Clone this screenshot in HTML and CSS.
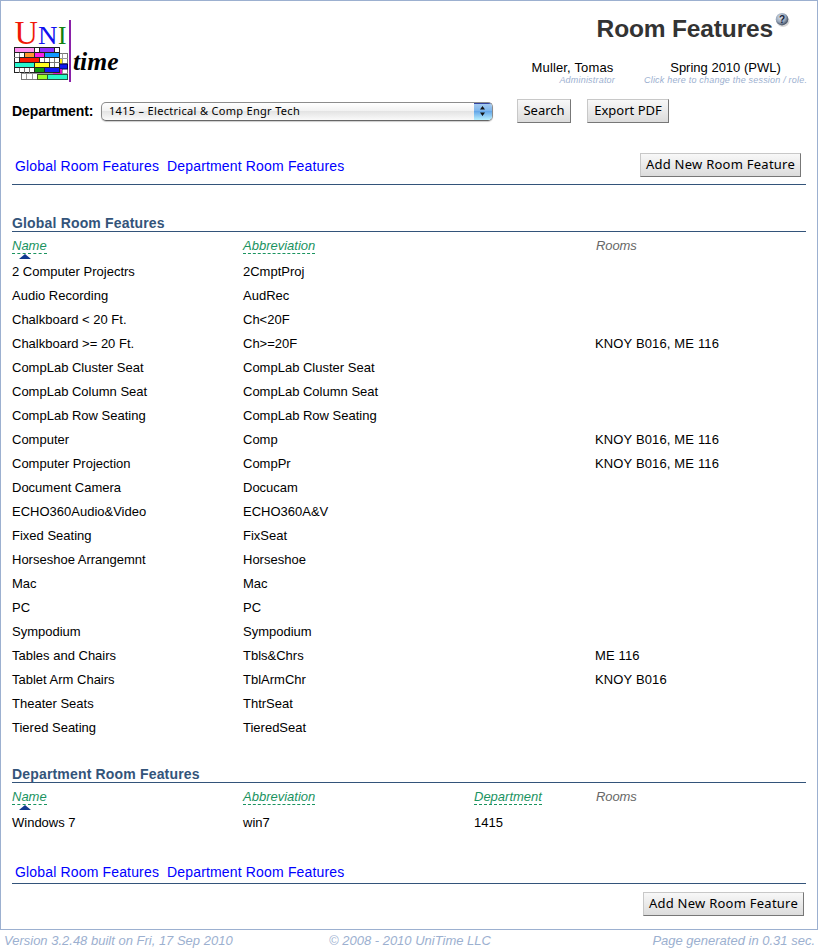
FILE: index.html
```
<!DOCTYPE html>
<html lang="en">
<head>
<meta charset="utf-8">
<title>Room Features</title>
<link rel="stylesheet" href="styles.css">
</head>
<body>
<div class="frame">
  <header class="header">
    <svg class="logo" width="110" height="76" viewBox="12 8 110 76" aria-label="UniTime">
      <g font-family="Liberation Serif, serif">
        <text x="14.5" y="43.5" font-size="33" fill="#f01808" textLength="23.5" lengthAdjust="spacingAndGlyphs">U</text>
        <text x="38" y="43.5" font-size="26" fill="#1010f0" textLength="19.5" lengthAdjust="spacingAndGlyphs">N</text>
        <text x="58" y="43.5" font-size="26" fill="#108010" textLength="8.5" lengthAdjust="spacingAndGlyphs">I</text>
        <text x="73" y="69.5" font-size="25" font-weight="bold" font-style="italic" textLength="45.5" lengthAdjust="spacingAndGlyphs">time</text>
      </g>
      <path d="M70 20V82" stroke="#8a20a8" stroke-width="2"/>
      <g stroke-width="1">
        <rect x="21.5" y="53.5" width="46" height="26" fill="#fff" stroke="#777"/>
        <path d="M62.500 53.500v26M57.500 74v5M52.500 74v5M47.500 74v5M42.500 74v5M37.500 74v5M32.500 74v5M26.500 74v5M60 58.500h8M60 63.500h8M60 68.500h8M22 73.500h46" stroke="#999"/>
        <rect x="58" y="59" width="4" height="5" fill="#ffee10"/>
        <rect x="59" y="64" width="8.500" height="5" fill="#1018f0" stroke="#004"/>
        <rect x="53" y="69" width="9" height="5" fill="#e010c0"/>
        <rect x="37.500" y="74.500" width="10" height="5" fill="#98ff28" stroke="#452"/>
        <rect x="47.500" y="74.500" width="20" height="5" fill="#28f8c8" stroke="#254"/>
        <rect x="14.500" y="47.500" width="45" height="25" fill="#fff" stroke="#222"/>
        <path d="M14 52.500h46M14 57.500h46M14 62.500h46M14 67.500h46M19.500 53v9M24.500 53v5M44.500 58v5M49.500 58v5M54.500 58v15M19.500 68v5M24.500 68v5M29.500 68v5M34.500 68v5" stroke="#777"/>
        <g stroke="#222">
          <rect x="14.500" y="47.500" width="20" height="5" fill="#ff90f0"/>
          <rect x="39.500" y="47.500" width="15" height="5" fill="#9030ff"/>
          <rect x="24.500" y="52.500" width="10" height="5" fill="#ff9830"/>
          <rect x="34.500" y="52.500" width="10" height="5" fill="#f820e8"/>
          <rect x="44.500" y="52.500" width="15" height="5" fill="#1098ff"/>
          <rect x="19.500" y="57.500" width="20" height="5" fill="#f81800"/>
          <rect x="14.500" y="62.500" width="20" height="5" fill="#28f8d0"/>
          <rect x="34.500" y="62.500" width="15" height="5" fill="#ffff20"/>
          <rect x="34.500" y="67.500" width="10" height="5" fill="#109810"/>
          <rect x="44.500" y="67.500" width="15" height="5" fill="#1018f8"/>
        </g>
      </g>
    </svg>
    <div class="heading">
      <h1><span class="title">Room Features</span><svg class="help" width="15" height="16" viewBox="0 0 15 16">
        <defs><radialGradient id="ball" cx=".4" cy=".35" r=".65"><stop offset="0" stop-color="#dce6f0"/><stop offset=".6" stop-color="#9aa8bb"/><stop offset="1" stop-color="#445064"/></radialGradient></defs>
        <ellipse cx="8" cy="9" rx="6.500" ry="6" fill="#bbb" opacity=".6"/>
        <circle cx="7" cy="7.200" r="6.200" fill="url(#ball)"/>
        <text x="7" y="10.800" text-anchor="middle" font-family="Liberation Sans, sans-serif" font-size="10" font-weight="bold" fill="#18233a">?</text>
      </svg></h1>
      <div class="session">
        <div class="user"><div class="main">Muller, Tomas</div><div class="hint">Administrator</div></div>
        <div class="term"><div class="main">Spring 2010 (PWL)</div><div class="hint">Click here to change the session / role.</div></div>
      </div>
    </div>
  </header>

  <div class="filter">
    <label>Department:</label>
    <div class="select"><span>1415 – Electrical &amp; Comp Engr Tech</span><i><svg width="18" height="16" viewBox="0 0 18 16"><path d="M6 6.500L8.500 3L11 6.500zM6 9.500L8.500 13L11 9.500z" fill="#111"/></svg></i></div>
    <button class="search">Search</button>
    <button class="export">Export PDF</button>
  </div>

  <div class="toolbar">
    <nav><a>Global Room Features</a><a>Department Room Features</a></nav>
    <button class="add">Add New Room Feature</button>
  </div>

  <section class="global">
    <h2>Global Room Features</h2>
    <div class="row head"><div><span class="sort">Name</span><b class="arrow"></b></div><div><span class="sort">Abbreviation</span></div><div></div><div>Rooms</div></div>
    <div class="row"><div>2 Computer Projectrs</div><div>2CmptProj</div></div>
    <div class="row"><div>Audio Recording</div><div>AudRec</div></div>
    <div class="row"><div>Chalkboard &lt; 20 Ft.</div><div>Ch&lt;20F</div></div>
    <div class="row"><div>Chalkboard &gt;= 20 Ft.</div><div>Ch&gt;=20F</div><div></div><div class="rooms">KNOY B016, ME 116</div></div>
    <div class="row"><div>CompLab Cluster Seat</div><div>CompLab Cluster Seat</div></div>
    <div class="row"><div>CompLab Column Seat</div><div>CompLab Column Seat</div></div>
    <div class="row"><div>CompLab Row Seating</div><div>CompLab Row Seating</div></div>
    <div class="row"><div>Computer</div><div>Comp</div><div></div><div class="rooms">KNOY B016, ME 116</div></div>
    <div class="row"><div>Computer Projection</div><div>CompPr</div><div></div><div class="rooms">KNOY B016, ME 116</div></div>
    <div class="row"><div>Document Camera</div><div>Docucam</div></div>
    <div class="row"><div>ECHO360Audio&amp;Video</div><div>ECHO360A&amp;V</div></div>
    <div class="row"><div>Fixed Seating</div><div>FixSeat</div></div>
    <div class="row"><div>Horseshoe Arrangemnt</div><div>Horseshoe</div></div>
    <div class="row"><div>Mac</div><div>Mac</div></div>
    <div class="row"><div>PC</div><div>PC</div></div>
    <div class="row"><div>Sympodium</div><div>Sympodium</div></div>
    <div class="row"><div>Tables and Chairs</div><div>Tbls&amp;Chrs</div><div></div><div class="rooms">ME 116</div></div>
    <div class="row"><div>Tablet Arm Chairs</div><div>TblArmChr</div><div></div><div class="rooms">KNOY B016</div></div>
    <div class="row"><div>Theater Seats</div><div>ThtrSeat</div></div>
    <div class="row"><div>Tiered Seating</div><div>TieredSeat</div></div>
  </section>

  <section class="departmental">
    <h2>Department Room Features</h2>
    <div class="row head"><div><span class="sort">Name</span><b class="arrow"></b></div><div><span class="sort">Abbreviation</span></div><div><span class="sort">Department</span></div><div>Rooms</div></div>
    <div class="row"><div>Windows 7</div><div>win7</div><div>1415</div></div>
  </section>

  <div class="bottom-links"><nav><a>Global Room Features</a><a>Department Room Features</a></nav></div>
  <div class="bottom-actions"><button class="add">Add New Room Feature</button></div>
</div>
<footer><span>Version 3.2.48 built on Fri, 17 Sep 2010</span><span>© 2008 - 2010 UniTime LLC</span><span>Page generated in 0.31 sec.</span></footer>
</body>
</html>
```
FILE: styles.css
```
* { box-sizing: border-box; }
html, body { margin: 0; height: 951px; overflow: hidden; background: #fff; }
body { font-family: "Liberation Sans", Arial, sans-serif; font-size: 13px; color: #000; }
.frame { height: 930px; border: 1px solid #9cb0d0; padding: 0 11px; }

.header { height: 92px; display: flex; justify-content: space-between; }
.logo { margin-top: 7px; display: block; flex: none; }
.heading { width: 300px; margin-right: -1px; }
h1 { margin: 11px 17px 0 0; height: 34px; display: flex; justify-content: flex-end; font-size: 24.5px; line-height: 33px; color: #333; white-space: nowrap; }
.title { letter-spacing: -.15px; }
.help { margin: 0 0 0 2px; display: block; }
.session { display: flex; justify-content: flex-end; margin-top: 13px; white-space: nowrap; }
.session .main { height: 16px; line-height: 17px; text-align: center; letter-spacing: .15px; }
.session .term .main { letter-spacing: 0; }
.session .hint { height: 11px; line-height: 11px; font-size: 9px; font-style: italic; color: #9cb0d0; text-align: right; letter-spacing: .2px; }
.user { width: 85px; margin-right: 29px; }
.term { width: 163px; }

.filter { display: flex; align-items: flex-start; height: 52px; padding-top: 6px; }
.filter label { width: 89px; font-size: 14px; font-weight: bold; line-height: 24px; letter-spacing: -.1px; }
.select { width: 392px; height: 19px; margin-top: 3px; border: 1px solid #8c8c8c; border-bottom-color: #666; border-radius: 5px; overflow: hidden; display: flex; justify-content: space-between; background: linear-gradient(#fff, #f2f2f2 45%, #e4e4e4 50%, #fafafa); font: 11px/17px "Noto Sans", sans-serif; box-shadow: 0 1px 1px #ccc; }
.select span { padding-left: 7px; letter-spacing: .31px; line-height: 16px; }
.select i { width: 18px; background: linear-gradient(#a9cdf0, #7db5ec 45%, #65a7e8 50%, #b8f0ff); box-shadow: inset 0 1px #3344a0; }
.select svg { display: block; }
button { height: 24px; padding: 0 0 1px; border: 1px solid; border-color: #c8c8c8 #777 #777 #c8c8c8; background: linear-gradient(#f8f8f8, #dcdcdc); font: 13px/21px "Noto Sans", sans-serif; color: #000; white-space: nowrap; border-radius: 0; }
.search { width: 54px; margin-left: 24px; }
.export { width: 82px; margin-left: 16px; }
.add { width: 161px; letter-spacing: .25px; }

.toolbar { height: 40px; display: flex; justify-content: space-between; align-items: flex-start; padding: 8px 5px 0 0; border-bottom: 1px solid #33547a; }
nav { display: flex; gap: 8px; padding-left: 3px; font-size: 14px; line-height: 26px; color: #00f; white-space: nowrap; letter-spacing: .16px; }
h2 { margin: 0; height: 17px; font-size: 14px; line-height: 16px; letter-spacing: .17px; color: #33547a; border-bottom: 1px solid #33547a; white-space: nowrap; }
.global { margin-top: 30px; }
.departmental { margin-top: 26px; }
.row { display: grid; grid-template-columns: 231px 231px 121px 211px; height: 24px; line-height: 24px; white-space: nowrap; }
.rooms { letter-spacing: .14px; }
.row.head { height: 28px; font-style: italic; color: #666; }
.head > div { padding-top: 6px; line-height: 15px; }
.head > div:last-child { letter-spacing: -.1px; padding-left: 1px; }
.sort { display: inline-block; height: 16px; line-height: 15px; color: #1a935f; border-bottom: 1px dashed #1a935f; }
.arrow { display: block; width: 0; margin: 0 0 0 7px; border: 6px solid transparent; border-top: 0; border-bottom: 5px solid #123a90; }
.bottom-links { height: 49px; padding-top: 24px; border-bottom: 1px solid #33547a; }
.bottom-actions { display: flex; justify-content: flex-end; padding: 8px 2px 0 0; }
footer { display: grid; grid-template-columns: 325px 1fr auto; height: 20px; padding: 0 3px 0 4px; line-height: 21px; font-size: 13px; font-style: italic; color: #9cb0d0; white-space: nowrap; }
```
